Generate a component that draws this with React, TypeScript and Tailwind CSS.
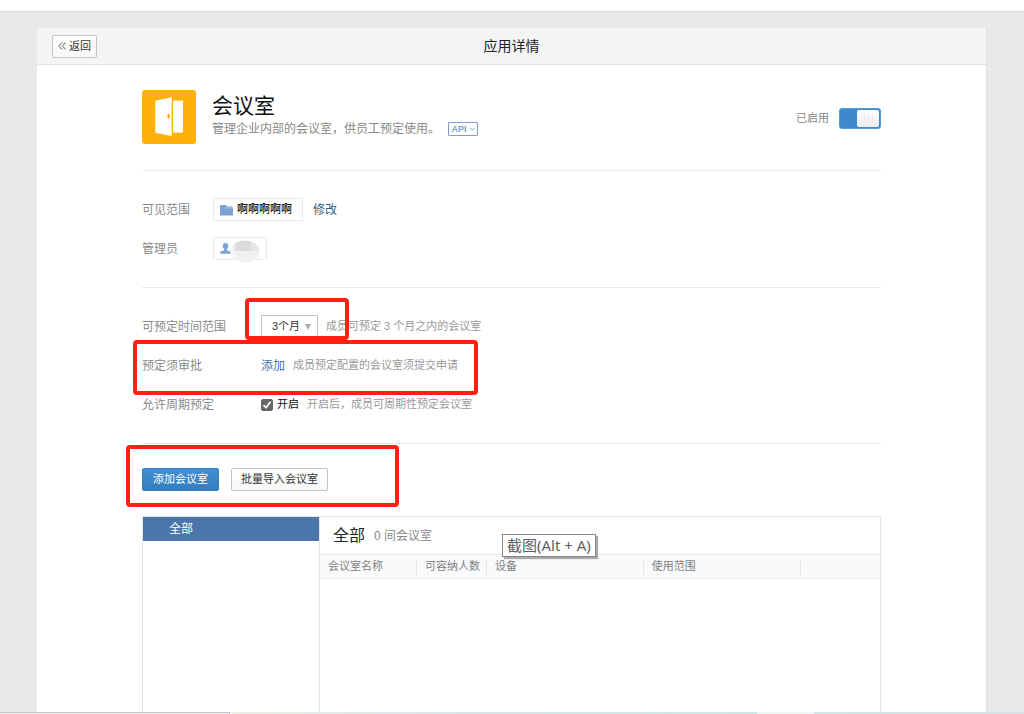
import type { ReactNode } from "react";

function DoorIcon() {
  return (
    <svg className="h-[54px] w-[54px] shrink-0" viewBox="0 0 162 162" aria-hidden="true">
      <rect width="162" height="162" rx="9" fill="#ffb108" />
      <path d="M40 32 89 22v116l-49-10Z" fill="#fff" />
      <rect x="93" y="32" width="30" height="96" fill="#fff" />
      <ellipse cx="80" cy="79" rx="4" ry="7.500" fill="#ffb108" />
    </svg>
  );
}

function FolderIcon() {
  return (
    <svg className="h-3 w-[13px] shrink-0" viewBox="0 0 13 12" aria-hidden="true">
      <path d="M0 1h6l1 1.500h5.500V4H0Z" fill="#7da2d4" />
      <path d="M0 4h13v7.500H0Z" fill="#7da2d4" />
      <path d="M5 3.900h8" stroke="#c3d4ec" strokeWidth=".7" />
    </svg>
  );
}

function PersonIcon() {
  return (
    <svg className="h-[11px] w-[11px] shrink-0" viewBox="0 0 11 11" aria-hidden="true">
      <path
        d="M5.500 0C3.700 0 2.700 1.200 2.700 2.900c0 1.400.6 2.500 1.500 3.200v1.100L1.200 8.300C.5 8.600.2 9 .2 9.600V10.700h10.600V9.600c0-.6-.3-1-1-1.300L6.800 7.200V6.100C7.700 5.400 8.300 4.300 8.300 2.900 8.300 1.200 7.300 0 5.500 0Z"
        fill="#7da2d4"
      />
    </svg>
  );
}

function MosaicBlob() {
  return (
    <svg className="absolute top-0.5 left-4 h-[23px] w-[30px]" viewBox="0 0 30 23" aria-hidden="true">
      <defs>
        <clipPath id="blob">
          <ellipse cx="15" cy="11.500" rx="14.500" ry="11" />
        </clipPath>
      </defs>
      <g clipPath="url(#blob)">
        <rect width="30" height="23" fill="#f0f1f2" />
        <rect x="5" width="16" height="11" fill="#dcdcdd" />
        <rect x="21" width="9" height="11" fill="#e6e6e7" />
        <rect y="11" width="5" height="12" fill="#f5f6f7" />
      </g>
    </svg>
  );
}

function Row({ label, htmlFor, wide, children }: { label: string; htmlFor?: string; wide?: boolean; children: ReactNode }) {
  const width = wide ? "w-[119px]" : "w-[71px]";
  return (
    <div className="flex h-[39px] items-center">
      <label htmlFor={htmlFor} className={`${width} shrink-0 text-[12px] text-[#8a8a8a]`}>
        {label}
      </label>
      {children}
    </div>
  );
}

const hint = "ml-2 text-[11px] text-[#999]";
const marker = "pointer-events-none absolute rounded-[4px] border-4 border-[#ff2012]";
const grayButton =
  "flex h-[23px] items-center rounded-[2px] border border-[#c4c4c4] bg-linear-to-b from-white to-[#f8f8f8] text-[11px] text-[#333]";

const columns = [
  { title: "会议室名称", width: "w-[97px]" },
  { title: "可容纳人数", width: "w-[70px]" },
  { title: "设备", width: "w-[28%]" },
  { title: "使用范围", width: "w-[28%]" },
  { title: "", width: "" },
];

export default function App() {
  return (
    <div className="flex min-h-screen flex-col bg-[#e8e9eb] font-['Liberation_Sans','Noto_Sans_CJK_SC',sans-serif] leading-none">
      <div className="h-3 border-b border-[#dadbdc] bg-white" />
      <main className="mt-4 mr-[38px] ml-[37px] flex flex-1 flex-col rounded-t-[3px] bg-white shadow-[1px_0_1px_#dfe0e2]">
        <header className="grid h-[37px] grid-cols-[1fr_auto_1fr] items-center rounded-t-[3px] border-b border-[#e0e4ea] bg-[#f4f4f4] px-[15px]">
          <button type="button" className={`${grayButton} w-[45px] justify-center gap-[3px]`}>
            <svg className="h-2 w-2" viewBox="0 0 8 8" fill="none" stroke="#999" strokeWidth="1.200" aria-hidden="true">
              <path d="M4 .5 1 4l3 3.500M7.500.5 4.500 4l3 3.500" />
            </svg>
            返回
          </button>
          <h1 className="text-[14px] text-[#222]">应用详情</h1>
        </header>

        <div className="flex flex-1 flex-col px-[105px]">
          <section className="flex h-[106px] items-start border-b border-[#ebebeb] pt-[25px]">
            <DoorIcon />
            <div className="ml-4 pt-[5px]">
              <h2 className="text-[21px] leading-[22px] text-[#111]">会议室</h2>
              <div className="flex items-center text-[12px] leading-6 text-[#888]">
                <p>管理企业内部的会议室，供员工预定使用。</p>
                <button
                  type="button"
                  className="ml-2 flex h-[14px] w-[30px] items-center justify-center gap-[3px] rounded-[1px] border border-[#7c9fc9] text-[9px] leading-none font-bold text-[#7c9fc9]"
                >
                  API
                  <svg className="h-1 w-[5px]" viewBox="0 0 5 4" fill="none" stroke="currentColor" aria-hidden="true">
                    <path d="M.5 1 2.500 3l2-2" />
                  </svg>
                </button>
              </div>
            </div>
            <label className="mt-[18px] ml-auto flex h-[21px] items-center gap-[10px] text-[11px] text-[#888]">
              已启用
              <input type="checkbox" role="switch" defaultChecked className="peer sr-only" />
              <span className="flex h-[21px] w-[42px] justify-end rounded-[3px] border border-[#5a9bd5] bg-[#3e89cb] p-px">
                <span className="flex w-[22px] items-center justify-center gap-[3px] rounded-[2px] bg-linear-to-b from-white to-[#ececf3]">
                  <span className="h-2 w-px bg-[#e8e8f0]" />
                  <span className="h-2 w-px bg-[#e8e8f0]" />
                  <span className="h-2 w-px bg-[#e8e8f0]" />
                </span>
              </span>
            </label>
          </section>

          <section className="border-b border-[#ebebeb] py-[19px]">
            <Row label="可见范围">
              <span className="flex h-[23px] items-center gap-1 rounded-[1px] border border-[#e8eaec] pr-[10px] pl-[6px] text-[11px] text-[#111]">
                <FolderIcon />
                <span className="font-medium">啊啊啊啊啊</span>
              </span>
              <a href="#scope" className="ml-[10px] text-[12px] text-[#2f6289]">
                修改
              </a>
            </Row>
            <Row label="管理员">
              <span className="relative flex h-[23px] w-[54px] items-center rounded-[1px] border border-[#e8eaec] pl-[6px]">
                <PersonIcon />
                <MosaicBlob />
              </span>
            </Row>
          </section>

          <section className="relative border-b border-[#ebebeb] py-[19px]">
            <Row label="可预定时间范围" htmlFor="range" wide>
              <span className="relative flex">
                <select
                  id="range"
                  className="h-[23px] w-[57px] appearance-none border border-[#c4c4c4] bg-white pl-[10px] text-[11px] text-[#333]"
                >
                  <option>3个月</option>
                </select>
                <svg className="pointer-events-none absolute top-[9px] right-[7px] h-[6px] w-[6px]" viewBox="0 0 6 6" aria-hidden="true">
                  <path d="M0 0h6L3 6Z" fill="#aaa" />
                </svg>
              </span>
              <span className={hint}>成员可预定 3 个月之内的会议室</span>
            </Row>
            <Row label="预定须审批" wide>
              <a href="#approval" className="text-[12px] text-[#4573ad]">
                添加
              </a>
              <span className={hint}>成员预定配置的会议室须提交申请</span>
            </Row>
            <Row label="允许周期预定" htmlFor="repeat" wide>
              <span className="relative flex">
                <input
                  id="repeat"
                  type="checkbox"
                  defaultChecked
                  className="peer h-3 w-3 appearance-none rounded-[2px] border border-[#666] checked:bg-[#666]"
                />
                <svg className="pointer-events-none absolute h-3 w-3 opacity-0 peer-checked:opacity-100" viewBox="0 0 12 12" fill="none" stroke="#fff" strokeWidth="1.700" aria-hidden="true">
                  <path d="m2.500 6.200 2.500 2.600 4.500-6" />
                </svg>
              </span>
              <label htmlFor="repeat" className="ml-1 text-[11px] text-[#111]">
                开启
              </label>
              <span className={hint}>开启后，成员可周期性预定会议室</span>
            </Row>
            <div className={`${marker} top-[10px] left-[103px] h-[42px] w-[104px]`} />
            <div className={`${marker} top-[52px] -left-[9px] h-[55px] w-[345px]`} />
          </section>

          <section className="relative flex flex-1 flex-col pt-6">
            <div className="flex gap-3">
              <button
                type="button"
                className="h-[23px] rounded-[2px] border border-[#357fbe] bg-linear-to-b from-[#428fd3] to-[#347dbb] px-[10px] text-[11px] text-white"
              >
                添加会议室
              </button>
              <button type="button" className={`${grayButton} px-[9px]`}>
                批量导入会议室
              </button>
            </div>
            <div className={`${marker} top-px -left-4 h-[62px] w-[273px]`} />

            <div className="relative mt-[25px] flex min-h-[196px] flex-1 border border-b-0 border-[#e2e3e4]">
              <nav className="w-[177px] shrink-0 border-r border-[#e2e3e4]">
                <a href="#all" className="flex h-6 items-center bg-[#4a76ab] pl-[26px] text-[12px] text-white">
                  全部
                </a>
              </nav>
              <div className="min-w-0 flex-1">
                <div className="flex h-[37px] items-center gap-[9px] pl-[13px]">
                  <h3 className="text-[16px] text-[#222]">全部</h3>
                  <span className="text-[12px] text-[#888]">0 间会议室</span>
                </div>
                <table className="w-full table-fixed">
                  <thead>
                    <tr className="h-6 border-y border-[#e8ebee] bg-[#f9fafc]">
                      {columns.map((c, i) => (
                        <th key={i} className={`${c.width} p-0 text-left text-[11px] font-normal text-[#808080]`}>
                          <span
                            className={
                              i < columns.length - 1
                                ? "flex h-4 items-center border-r border-[#e4e7ea] pl-2 whitespace-nowrap"
                                : "block h-4"
                            }
                          >
                            {c.title}
                          </span>
                        </th>
                      ))}
                    </tr>
                  </thead>
                </table>
              </div>
              <div
                role="tooltip"
                className="absolute top-[17px] left-[359px] flex h-[23px] items-center border border-[#888] bg-white px-1 font-['Noto_Sans','Noto_Sans_CJK_SC',sans-serif] text-[15px] whitespace-nowrap text-[#606060] shadow-[2px_2px_1px_#aaa]"
              >
                截图(Alt + A)
              </div>
            </div>
          </section>
        </div>
      </main>
      <footer className="flex h-0.5">
        <div className="w-[230px] border-t border-r border-[#c4c4c4] bg-[#f2f2f2]" />
        <div className="flex-1 bg-linear-to-r from-[#eceee4] via-[#d5e5ec] to-[#cde8e8]" />
        <div className="w-[57px] bg-[#edf5f5]" />
        <div className="w-[210px] bg-linear-to-r from-[#d0e7e8] to-[#d6e0e9]" />
      </footer>
    </div>
  );
}
